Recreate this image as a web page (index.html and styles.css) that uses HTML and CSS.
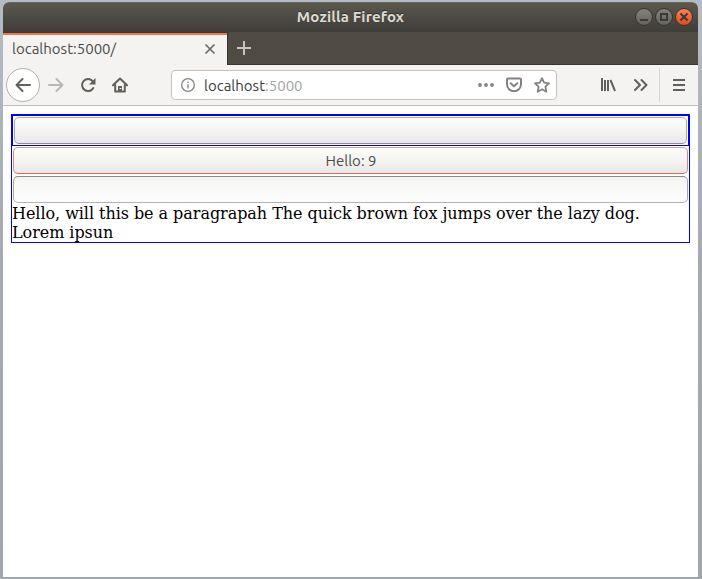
FILE: index.html
```html
<!DOCTYPE html>
<html lang="en">
<head>
<meta charset="utf-8">
<title>Mozilla Firefox</title>
<link rel="stylesheet" href="styles.css">
</head>
<body>
<div class="window">
  <header class="titlebar">
    <span class="title">Mozilla Firefox</span>
    <div class="controls">
      <span class="control"><svg viewBox="0 0 16 16"><path d="M4 11H12"/></svg></span>
      <span class="control"><svg viewBox="0 0 16 16"><rect x="5" y="5" width="6" height="6"/></svg></span>
      <span class="control close"><svg viewBox="0 0 16 16"><path d="M4.500 4.500L11.500 11.500M11.500 4.500L4.500 11.500"/></svg></span>
    </div>
  </header>
  <div class="tabs">
    <div class="tab"><span class="tab-label">localhost:5000/</span>
      <svg class="tab-close" viewBox="0 0 12 12"><path d="M1.5 1.5L10.5 10.5M10.5 1.5L1.5 10.5"/></svg>
    </div>
    <svg class="new-tab" viewBox="0 0 14 14"><path d="M7 0V14M0 7H14"/></svg>
  </div>
  <nav class="toolbar">
    <span class="back"><svg class="icon" viewBox="0 0 16 16"><path d="M15 8H1.5M7.5 2L1.5 8L7.5 14"/></svg></span>
    <svg class="icon forward" viewBox="0 0 16 16"><path d="M1 8H14.5M8.500 2L14.500 8L8.500 14"/></svg>
    <svg class="icon reload" viewBox="0 0 16 16"><path d="M13.300 11A6 6 0 1 1 12.500 4"/><path class="solid" d="M15.500 1V7.500H9Z"/></svg>
    <svg class="icon home" viewBox="0 0 16 16"><path d="M1 8.300L8 1.500L15 8.300M3.200 8V14.600H12.800V8"/><path class="solid" d="M6 9H10V15H6Z"/><path class="knob" d="M8 11.500H9"/></svg>
    <div class="address">
      <svg class="info" viewBox="0 0 14 14"><circle cx="7" cy="7" r="6.300"/><path d="M7 6.200V10.500M7 3.500V5"/></svg>
      <span class="url">localhost<span class="port">:5000</span></span>
      <svg class="icon dots" viewBox="0 0 16 16"><circle cx="2" cy="8" r="1.900"/><circle cx="8" cy="8" r="1.900"/><circle cx="14" cy="8" r="1.900"/></svg>
      <svg class="icon light pocket" viewBox="0 0 16 16"><path d="M2 1.500H14Q15 1.500 15 2.500V7.300A7 7 0 0 1 1 7.300V2.500Q1 1.500 2 1.500Z"/><path d="M4.700 6.200L8 9.300L11.300 6.200"/></svg>
      <svg class="icon light star" viewBox="0 0 16 16"><path d="M8 1.200L10.100 5.700L15 6.300L11.400 9.700L12.300 14.700L8 12.300L3.700 14.700L4.600 9.700L1 6.300L5.900 5.700Z"/></svg>
    </div>
    <svg class="icon library" viewBox="0 0 16 16"><path d="M2 1V14M5 3V14M8 3V14M10.500 3L15 14"/></svg>
    <svg class="icon more" viewBox="0 0 16 16"><path d="M2 3L7 8L2 13M8.500 3L13.500 8L8.500 13"/></svg>
    <span class="divider"></span>
    <svg class="icon menu" viewBox="0 0 16 16"><path d="M2 3H14M2 8H14M2 13H14"/></svg>
  </nav>
  <main class="page">
    <div class="outer">
      <div class="inner"><button class="btn"></button></div>
      <button class="btn focus">Hello: 9</button>
      <button class="btn pressed"></button>
      <div class="paragraph">Hello, will this be a paragrapah The quick brown fox jumps over the lazy dog.<br>Lorem ipsun</div>
    </div>
  </main>
</div>
</body>
</html>
```
FILE: styles.css
```css
* { box-sizing: border-box; }
body {
  margin: 0;
  width: 702px;
  height: 579px;
  padding: 2px 4px 2px 3px;
  overflow: hidden;
  background: linear-gradient(#b4bcc6, #a5a9b0 45%, #a0a6ac);
  font-family: Ubuntu, "Noto Sans", sans-serif;
}
svg { display: block; flex: none; fill: none; }
.window {
  height: 575px;
  display: flex;
  flex-direction: column;
  background: #fff;
  border-radius: 6px 6px 0 0;
  overflow: hidden;
}
.titlebar {
  height: 30px;
  flex: none;
  display: grid;
  grid-template-columns: 1fr auto 1fr;
  align-items: center;
  padding-bottom: 1px;
  background: linear-gradient(#5b584e, #3e3d38);
  border-top: 1px solid #66635a;
}
.title {
  grid-column: 2;
  color: #dfdbd2;
  font-size: 15px;
  letter-spacing: .15px;
  line-height: 27px;
  padding-bottom: 1px;
  font-weight: 700;
  text-shadow: 0 -1px #33322e;
}
.controls { display: flex; justify-content: flex-end; gap: 2px; padding-right: 5px; }
.control {
  width: 18px;
  height: 18px;
  border-radius: 50%;
  border: 1px solid #35342f;
  background: linear-gradient(#85827a, #64625b);
}
.control svg { width: 16px; height: 16px; stroke: #3b3a35; stroke-width: 2; }
.close { background: linear-gradient(#f6835b, #e34b17); }
.tabs {
  height: 33px;
  flex: none;
  display: flex;
  background: #504c44;
  box-shadow: inset 0 -1px #38362f;
}
.tab {
  width: 224px;
  height: 33px;
  display: flex;
  align-items: center;
  justify-content: space-between;
  padding: 0 11px 0 9px;
  background: linear-gradient(#f07746 0 2px, #f4f3f1 2px);
  border-top: 1px solid #3c3b37;
  background-clip: padding-box;
  box-shadow: 1px 0 #35332e;
}
.tab-label { color: #4c4c4c; font-size: 15px; line-height: 30px; }
.tab-close { width: 12px; height: 12px; stroke: #6c6a66; stroke-width: 1.7; }
.new-tab { width: 14px; height: 14px; margin: 9px 0 0 10px; stroke: #c8c5bd; stroke-width: 2; }
.toolbar {
  height: 41px;
  flex: none;
  display: flex;
  align-items: center;
  padding-left: 3px;
  background: #f4f3f1;
  border-bottom: 1px solid #c5c2be;
}
.back {
  width: 34px;
  height: 34px;
  display: grid;
  place-items: center;
  border: 1px solid #b2b0ad;
  border-radius: 50%;
  background: #fff;
}
.icon { width: 16px; height: 16px; stroke: #62605c; stroke-width: 2; stroke-linecap: round; stroke-linejoin: round; }
.solid { fill: #62605c; stroke: none; }
.knob { stroke: #f4f3f1; stroke-width: 1; }
.forward { margin-left: 8px; stroke: #b8b7b4; }
.reload { margin-left: 16px; }
.home { margin-left: 16px; }
.address {
  width: 386px;
  height: 30px;
  margin-left: 43px;
  display: flex;
  align-items: center;
  padding: 0 6px 0 9px;
  background: #fff;
  border: 1px solid #c5c3bf;
  border-radius: 4px;
}
.info { width: 14px; height: 14px; stroke: #85837f; stroke-width: 1.3; }
.url { margin: 0 auto 0 9px; padding-top: 2px; font-size: 15px; line-height: 26px; color: #3c3c3c; }
.port { color: #a2a2a2; }
.dots { fill: #858380; stroke: none; }
.light { margin-left: 12px; stroke: #858380; }
.star { stroke-width: 1.8; }
.library { margin-left: 43px; stroke-linecap: butt; }
.more { margin-left: 17px; }
.divider { width: 1px; height: 34px; margin-left: 10px; background: #d9d7d4; }
.menu { margin-left: 11px; stroke-linecap: butt; }
.page { padding: 8px; }
.outer { border: 1px solid #00f; }
.inner { border: 1px solid #00f; }
.btn {
  display: block;
  width: calc(100% - 2px);
  height: 27px;
  margin: 1px;
  padding: 0;
  border: 1px solid;
  border-color: #b4b2af #a9a7a3 #8e8c89;
  border-radius: 5px;
  background: linear-gradient(#fdfdfd, #f5f4f3 50%, #e9e8e6);
  color: #4c4c4c;
  font: 15px/24px Ubuntu, "Noto Sans", sans-serif;
}
.focus { margin-bottom: 2px; padding-left: 1px; border-color: #df9e89 #d78d75 #c96f51; }
.pressed { border-color: #8c8b89 #aaa8a5 #b4b2af; background: linear-gradient(#f1f1f0, #f7f7f6 25%, #fdfdfd); }
.paragraph { color: #000; font: 16px/19px "DejaVu Serif", serif; letter-spacing: -.048px; white-space: nowrap; }
```
